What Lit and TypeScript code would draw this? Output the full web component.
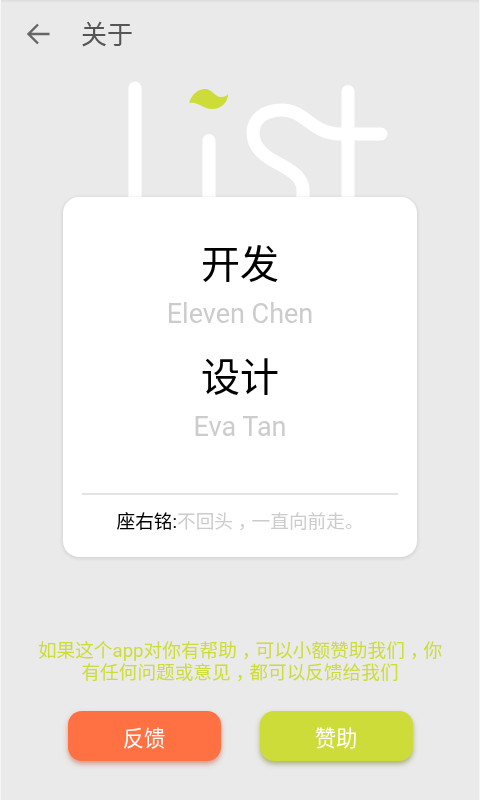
import { LitElement, html, css } from "lit";
import { customElement } from "lit/decorators.js";

@customElement("app-root")
export class AppRoot extends LitElement {
  static styles = css`
    :host {
      display: block;
      width: 480px;
      height: 800px;
      overflow: hidden;
      font-family: Roboto, "Noto Sans CJK SC", sans-serif;
    }
    .page {
      box-sizing: border-box;
      height: 800px;
      background: #eaeaea;
      border-left: 1px solid #f6f6f6;
      border-right: 1px solid #f6f6f6;
      display: flex;
      flex-direction: column;
      align-items: center;
      will-change: transform;
    }
    .status {
      align-self: stretch;
      height: 3px;
      background: linear-gradient(#dcdcdc, #eaeaea);
    }
    .bar {
      align-self: stretch;
      height: 58px;
      margin-bottom: 4px;
      display: flex;
      align-items: center;
      padding-left: 25px;
      gap: 31px;
      color: #555;
      font-size: 26px;
    }
    .back { width: 24px; height: 24px; display: block; margin-top: 4px; }
    .logo { display: block; width: 480px; height: 132px; flex: none; }
    .card {
      box-sizing: border-box;
      width: 354px;
      height: 360px;
      background: #fff;
      border-radius: 16px;
      box-shadow: 0 1px 4px rgba(0, 0, 0, 0.14);
      display: flex;
      flex-direction: column;
      align-items: center;
      padding-top: 41px;
    }
    .role { font-size: 39px; line-height: 54px; color: #000; margin-bottom: 5px; }
    .name { font-size: 27px; line-height: 34px; color: #ccc; margin-bottom: 20px; }
    .name.last { margin-bottom: 0; }
    .rule {
      width: 316px;
      height: 2px;
      background: #e4e4e4;
      margin-top: 49px;
    }
    .motto {
      margin-top: 14px;
      font-size: 18.67px;
      line-height: 26px;
      color: #ccc;
    }
    .motto b { font-weight: 400; color: #000; }
    .comma {
      padding-left: 0.26em;
      letter-spacing: -0.26em;
    }
    .note {
      width: 410px;
      margin-top: 83px;
      font-size: 18.67px;
      line-height: 22px;
      color: #cddc39;
      text-align: center;
    }
    .actions { display: flex; gap: 39px; margin-top: 27px; }
    .btn {
      width: 153px;
      height: 50px;
      border-radius: 14px;
      color: #fff;
      font-size: 21.33px;
      display: flex;
      align-items: center;
      justify-content: center;
    }
    .orange { background: #ff7043; box-shadow: 0 3px 5px rgba(190, 80, 45, 0.5); }
    .lime { background: #cddc39; box-shadow: 0 3px 5px rgba(110, 120, 30, 0.5); }
  `;

  render() {
    const comma = html`<span class="comma">，</span>`;
    return html`
      <div class="page">
        <div class="status"></div>
        <div class="bar">
          <svg class="back" viewBox="0 0 24 24" fill="none" stroke="#666" stroke-width="2.4">
            <path d="M23.5 12H2.5M12 2.5L2.5 12L12 21.5" />
          </svg>
          <span>关于</span>
        </div>
        <svg class="logo" viewBox="0 65 480 132" fill="none" stroke="#fff" stroke-width="13" stroke-linecap="round">
          <path d="M135 88V205" />
          <path d="M209 140.5V205" />
          <path d="M303 205V190C303 175 285 167 272 160C260 153 253 145 253 133C253 118 266 110 282 110C305 110 312 134 340 134H381" />
          <path d="M348 91.5V205" />
          <path stroke="none" fill="#cddc39" d="M189 103C192 94 198 89 205 89C212 89 215 97 221 97C224 97 227 96 228 94C228 102 222 109 212 109C203 109 198 101 189 103Z" />
        </svg>
        <div class="card">
          <div class="role">开发</div>
          <div class="name">Eleven Chen</div>
          <div class="role">设计</div>
          <div class="name last">Eva Tan</div>
          <div class="rule"></div>
          <div class="motto"><b>座右铭:</b>不回头${comma}一直向前走。</div>
        </div>
        <div class="note">如果这个app对你有帮助${comma}可以小额赞助我们${comma}你有任何问题或意见${comma}都可以反馈给我们</div>
        <div class="actions">
          <div class="btn orange">反馈</div>
          <div class="btn lime">赞助</div>
        </div>
      </div>
    `;
  }
}
